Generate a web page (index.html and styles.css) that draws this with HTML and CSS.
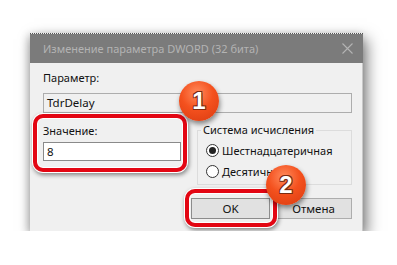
FILE: index.html
```html
<!DOCTYPE html>
<html lang="ru">
<head>
  <meta charset="UTF-8">
  <meta name="viewport" content="width=device-width, initial-scale=1.0">
  <title>Изменение параметра DWORD</title>
  <link rel="stylesheet" href="styles.css">
</head>
<body>
  <div class="window">
    <div class="titlebar">
      <span class="title">Изменение параметра DWORD (32 бита)</span>
      <svg class="close" width="11" height="11" viewBox="0 0 11 11">
        <path d="M0.5 0.5 L10.5 10.5 M10.5 0.5 L0.5 10.5" stroke="#b4b4b4" stroke-width="1.1" fill="none"/>
      </svg>
    </div>

    <div class="content">
      <div class="label">Параметр:</div>
      <div class="field wide">TdrDelay</div>

      <div class="row">
        <div class="value-col">
          <div class="label">Значение:</div>
          <div class="field value">8</div>
        </div>
        <div class="group">
          <div class="legend">Система исчисления</div>
          <div class="radio"><span class="dot checked"></span>Шестнадцатеричная</div>
          <div class="radio"><span class="dot"></span>Десятичная</div>
        </div>
      </div>

      <div class="buttons">
        <div class="btn ok">OK</div>
        <div class="btn">Отмена</div>
      </div>
    </div>

    <div class="mark mark-value"></div>
    <div class="mark mark-ok"></div>
    <div class="badge badge-one">1</div>
    <div class="badge badge-two">2</div>
  </div>
</body>
</html>
```

FILE: styles.css
```css
body {
  margin: 0;
  padding: 33px 0 0 30px;
  background-color: #ffffff;
  font-family: "Noto Sans", sans-serif;
  font-size: 11px;
  color: #111;
}
.window {
  position: relative;
  width: 333px;
  height: 198px;
  background-color: #f0f0f0;
  border-top: 1px dotted #555;
  box-sizing: border-box;
  box-shadow: 4px 6px 14px rgba(0, 0, 0, 0.5), -2px 2px 8px rgba(0, 0, 0, 0.2);
}
.titlebar {
  height: 29px;
  background-color: #7b7b7b;
  display: flex;
  align-items: center;
  justify-content: space-between;
  padding: 0 10px 0 13px;
}
.title {
  color: #b3b3b3;
  font-size: 11px;
}
.content {
  padding: 7px 10px 0 13px;
  border-right: 1px solid #c8c8c8;
  height: 168px;
  box-sizing: border-box;
}
.label {
  line-height: 16px;
}
.field {
  height: 20px;
  border: 1px solid #8a8a8a;
  background-color: #fff;
  box-sizing: border-box;
  padding: 0 3px;
  line-height: 18px;
  font-size: 11.5px;
}
.wide {
  margin-top: 7px;
  background-color: #f0f0f0;
  border-color: #adadad;
}
.row {
  display: flex;
  gap: 16px;
  margin-top: 10px;
}
.value-col {
  width: 138px;
}
.value {
  margin-top: 3px;
  height: 19px;
}
.group {
  position: relative;
  flex: 1;
  height: 55px;
  border: 1px solid #dcdcdc;
  margin-top: 7px;
  padding: 9px 0 0 8px;
  box-sizing: border-box;
}
.legend {
  position: absolute;
  top: -9px;
  left: 3px;
  padding: 0 2px;
  background-color: #f0f0f0;
  line-height: 16px;
}
.radio {
  display: flex;
  align-items: center;
  gap: 3px;
  height: 21px;
}
.dot {
  width: 13px;
  height: 13px;
  border: 1px solid #333;
  border-radius: 50%;
  background-color: #fff;
  box-sizing: border-box;
  display: flex;
  align-items: center;
  justify-content: center;
}
.dot.checked::after {
  content: "";
  width: 7px;
  height: 7px;
  border-radius: 50%;
  background-color: #222;
}
.buttons {
  display: flex;
  justify-content: flex-end;
  gap: 5px;
  margin-top: 13px;
}
.btn {
  width: 77px;
  height: 21px;
  border: 1px solid #adadad;
  background-color: #e1e1e1;
  box-sizing: border-box;
  text-align: center;
  line-height: 19px;
  font-size: 11.5px;
}
.btn.ok {
  width: 79px;
  border-color: #8c8c8c;
}
.mark {
  position: absolute;
  border: 4px solid #e30613;
  border-radius: 10px;
  box-shadow: 0 0 0 1px #fff, 1px 2px 4px 1px rgba(0, 0, 0, 0.45), inset 0 0 0 1px #fff;
}
.mark-value {
  left: 3px;
  top: 80px;
  width: 146px;
  height: 50px;
}
.mark-ok {
  left: 155px;
  top: 155px;
  width: 84px;
  height: 30px;
}
.badge {
  position: absolute;
  width: 40px;
  height: 40px;
  border-radius: 50%;
  background: radial-gradient(circle at 45% 30%, #ff8a5c 0%, #f4511e 45%, #d93a10 100%);
  box-shadow: 1px 3px 5px rgba(0, 0, 0, 0.45);
  color: #fff;
  font-family: "Liberation Sans", Arial, sans-serif;
  font-weight: bold;
  font-size: 24px;
  line-height: 40px;
  text-align: center;
  text-shadow: -1px -1px 0 #7a2a12, 1px -1px 0 #7a2a12, -1px 1px 0 #7a2a12, 1px 1px 0 #7a2a12;
}
.badge-one {
  left: 149px;
  top: 47px;
}
.badge-two {
  left: 236px;
  top: 131px;
}
```
